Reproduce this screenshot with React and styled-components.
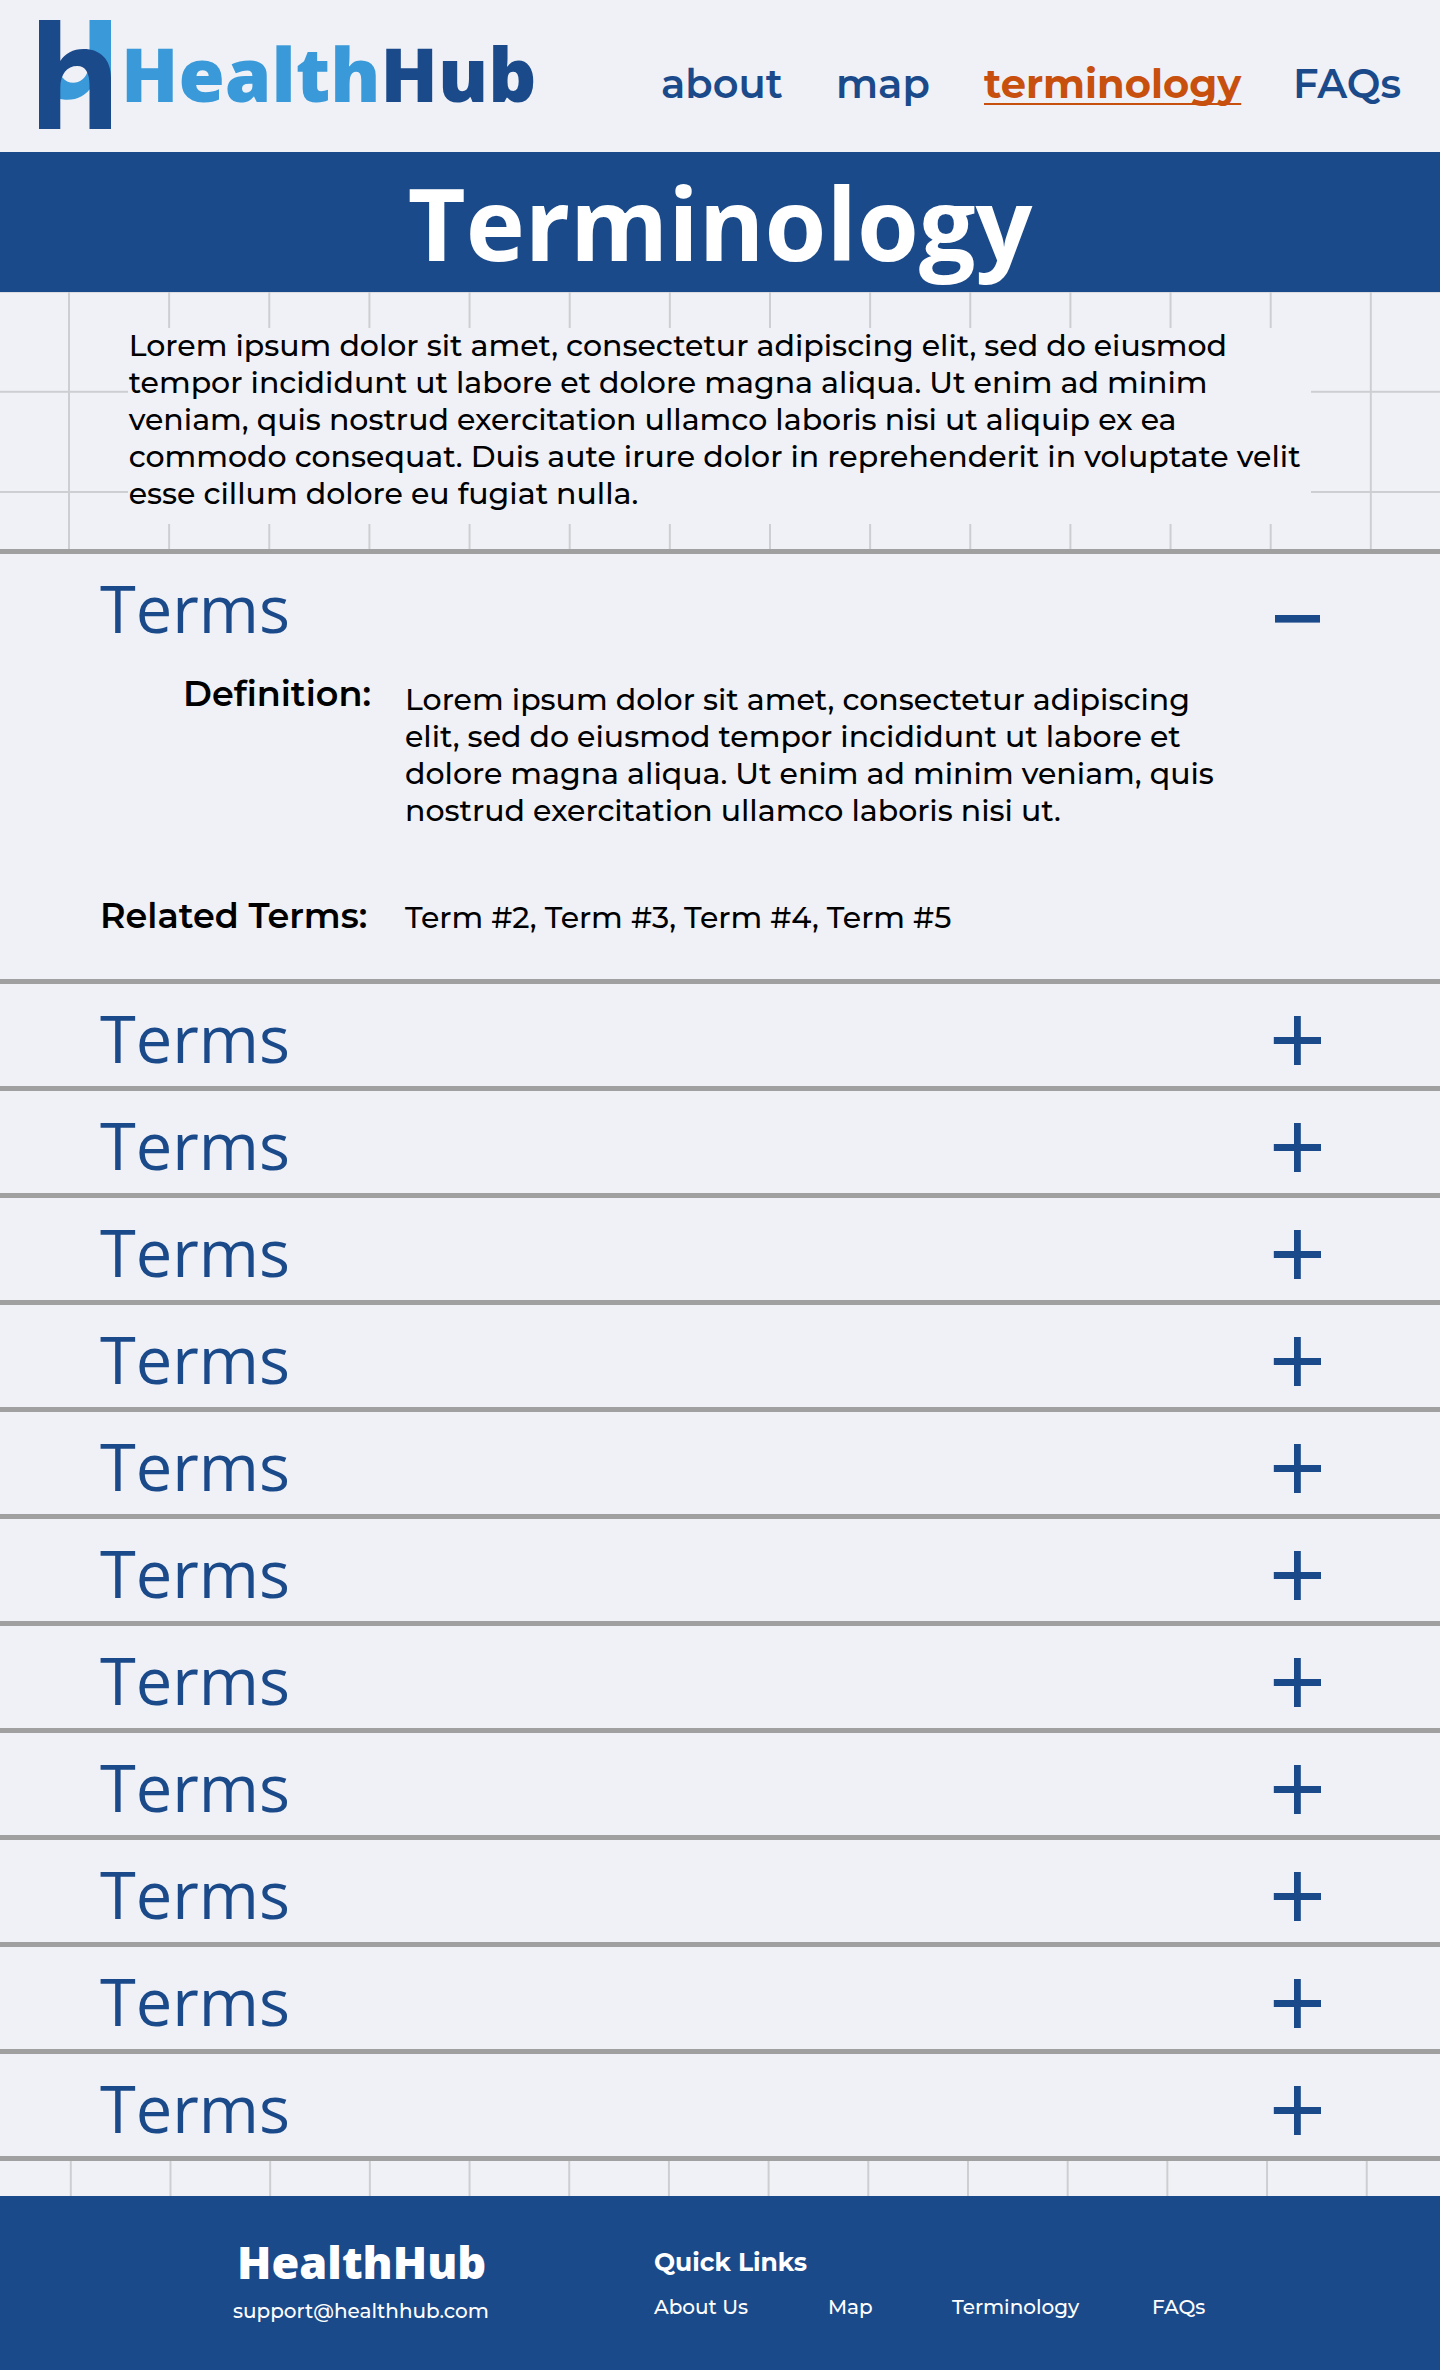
import React, { useState } from "react";
import styled, { createGlobalStyle } from "styled-components";

const blue = "#1b4a8b";
const sky = "#3a99d9";
const orange = "#c8500e";
const paper = "#f0f1f6";
const rule = "#a0a0a0";
const gridLine = "#cdced2";
const display = '"Open Sans", "Noto Sans", sans-serif';
const text = 'Montserrat, Inter, "Noto Sans", sans-serif';

const GlobalStyle = createGlobalStyle`
  * { box-sizing: border-box; }
  body { margin: 0; background: ${paper}; color: #000; font-family: ${text}; }
  h1, h2, h3, p, dl, dt, dd { margin: 0; font-weight: inherit; }
  a { color: inherit; text-decoration: none; }
`;

const Page = styled.div`
  width: 1440px;
  display: flex;
  flex-direction: column;
`;

const Header = styled.header`
  height: 152px;
  display: flex;
  align-items: flex-start;
  justify-content: space-between;
  padding: 20px 38px 0 39px;
`;

const Brand = styled.a`
  display: flex;
  align-items: flex-start;
  gap: 10px;
`;

const Mark = styled.svg`
  display: block;
  width: 72px;
  height: 109px;
`;

const Wordmark = styled.span`
  margin-top: 2px;
  font: 800 75px/102px ${display};
  color: ${blue};
`;

const WordmarkStart = styled.span`
  color: ${sky};
`;

const Nav = styled.nav`
  display: grid;
  grid-template-columns: 175px 148px 309px 109px;
  margin-top: 40px;
`;

const NavLink = styled.a`
  justify-self: start;
  font-size: 40px;
  line-height: 48px;
  font-weight: ${(p) => (p.$active ? 700 : 600)};
  color: ${(p) => (p.$active ? orange : blue)};
  text-decoration: ${(p) => (p.$active ? "underline" : "none")};
  text-decoration-thickness: 2px;
  text-underline-offset: 5px;
  text-decoration-skip-ink: none;
`;

const Banner = styled.div`
  height: 140px;
  background: ${blue};
  color: #fff;
  text-align: center;
`;

const Title = styled.h1`
  font: 700 100px/140px ${display};
`;

const Intro = styled.section`
  height: 257px;
  padding: 36px 129px 25px 128px;
  background-image: linear-gradient(to right, ${gridLine} 2.4px, transparent 2.4px),
    linear-gradient(to bottom, ${gridLine} 2.2px, transparent 2.2px);
  background-size: 100.15px 100%, 100% 100.2px;
  background-position: 68px 0, 0 98.8px;
`;

const IntroText = styled.div`
  display: flex;
  height: 196px;
  padding-left: 0.7px;
  background: ${paper};
`;

const Copy = styled.p`
  margin-top: -1px;
  font-size: 30px;
  line-height: 37px;
  font-weight: 500;
`;

const List = styled.main`
  border-top: 5px solid ${rule};
`;

const Item = styled.section`
  border-bottom: 5px solid ${rule};
`;

const ItemHead = styled.div`
  height: 102px;
  display: flex;
  align-items: center;
  justify-content: space-between;
  padding: 6px 119px 0 100px;
  color: ${blue};
  cursor: pointer;
`;

const ItemName = styled.h2`
  font: 400 65px/90px ${display};
`;

const Toggle = styled.svg`
  display: block;
  width: 48px;
  height: 50px;
  margin-top: ${(p) => (p.$open ? 22 : 5)}px;
`;

const Details = styled.dl`
  display: grid;
  grid-template-columns: 305px 830px;
  row-gap: 66px;
  padding: 16px 0 42px 100px;
`;

const Label = styled.dt`
  padding-top: ${(p) => p.$drop || 0}px;
  padding-left: ${(p) => p.$indent || 0}px;
  font-size: 35px;
  line-height: 42px;
  font-weight: 600;
`;

const Value = styled.dd`
  padding-top: ${(p) => p.$drop}px;
  height: ${(p) => p.$height}px;
  font-size: 30px;
  line-height: 37px;
  font-weight: 500;
`;

const GridStrip = styled.div`
  height: 35px;
  background-image: linear-gradient(to right, ${gridLine} 2.4px, transparent 2.4px);
  background-size: 99.7px 100%;
  background-position: 69.8px 0;
`;

const Footer = styled.footer`
  height: 174px;
  display: grid;
  grid-template-columns: 421px 1fr;
  padding-left: 233px;
  background: ${blue};
  color: #fff;
`;

const FooterBrand = styled.div`
  display: flex;
  flex-direction: column;
  gap: 7px;
  padding-top: 36px;
`;

const FooterName = styled.span`
  margin-left: 4px;
  font: 800 45px/60px ${display};
`;

const FooterText = styled.a`
  font-size: 20px;
  line-height: 24px;
  font-weight: 500;
`;

const QuickLinks = styled.nav`
  display: flex;
  flex-direction: column;
  gap: 18px;
  padding-top: 51px;
`;

const QuickTitle = styled.h3`
  font-size: 25px;
  line-height: 30px;
  font-weight: 700;
`;

const QuickRow = styled.div`
  display: grid;
  grid-template-columns: 174px 124px 200px auto;
`;

const NAV = ["about", "map", "terminology", "FAQs"];
const CURRENT = "terminology";
const LINKS = ["About Us", "Map", "Terminology", "FAQs"];
const TERMS = Array.from({ length: 12 }, (_, id) => ({ id, name: "Terms" }));

function Logo() {
  return (
    <Mark viewBox="0 0 72 109" aria-hidden="true">
      <path fill={sky} d="M50.5 0H72V62H50.5Z" />
      <path
        fill={sky}
        d="M21 57L23.5 57.5C26 61 30 62.7 34.3 62.7C41 62.7 46 58.5 48.5 52L53 52V66C47.5 75 39 79.8 28.3 79.8C25.5 79.8 23 79.5 21 79Z"
      />
      <path
        fill={blue}
        d="M0 0H21.3V41C26 33.5 34 29 44.5 29C61 29 72 39 72 58V109H50.5V65C50.5 53 46.5 46 38.3 46C28 46 21.3 54 21.3 68V109H0Z"
      />
    </Mark>
  );
}

function ToggleIcon({ open }) {
  return (
    <Toggle viewBox="0 0 48 50" $open={open} aria-hidden="true">
      {open ? (
        <rect x="2" y="21" width="45" height="7.6" fill={blue} />
      ) : (
        <>
          <rect x="0.8" y="21" width="47.2" height="7" fill={blue} />
          <rect x="21" y="0" width="6.8" height="49" fill={blue} />
        </>
      )}
    </Toggle>
  );
}

function Term({ name, open, onToggle }) {
  return (
    <Item>
      <ItemHead onClick={onToggle}>
        <ItemName>{name}</ItemName>
        <ToggleIcon open={open} />
      </ItemHead>
      {open && (
        <Details>
          <Label $indent={83} $drop={1}>
            Definition:
          </Label>
          <Value $drop={9} $height={157}>
            Lorem ipsum dolor sit amet, consectetur adipiscing elit, sed do
            eiusmod tempor incididunt ut labore et dolore magna aliqua. Ut enim
            ad minim veniam, quis nostrud exercitation ullamco laboris nisi ut.
          </Value>
          <Label>Related Terms:</Label>
          <Value $drop={4} $height={42}>
            Term #2, Term #3, Term #4, Term #5
          </Value>
        </Details>
      )}
    </Item>
  );
}

export default function App() {
  const [openId, setOpenId] = useState(0);

  return (
    <Page>
      <GlobalStyle />
      <Header>
        <Brand href="#">
          <Logo />
          <Wordmark>
            <WordmarkStart>Health</WordmarkStart>Hub
          </Wordmark>
        </Brand>
        <Nav>
          {NAV.map((label) => (
            <NavLink key={label} href="#" $active={label === CURRENT}>
              {label}
            </NavLink>
          ))}
        </Nav>
      </Header>
      <Banner>
        <Title>Terminology</Title>
      </Banner>
      <Intro>
        <IntroText>
          <Copy>
            Lorem ipsum dolor sit amet, consectetur adipiscing elit, sed do
            eiusmod tempor incididunt ut labore et dolore magna aliqua. Ut enim
            ad minim veniam, quis nostrud exercitation ullamco laboris nisi ut
            aliquip ex ea commodo consequat. Duis aute irure dolor in
            reprehenderit in voluptate velit esse cillum dolore eu fugiat nulla.
          </Copy>
        </IntroText>
      </Intro>
      <List>
        {TERMS.map(({ id, name }) => (
          <Term
            key={id}
            name={name}
            open={id === openId}
            onToggle={() => setOpenId(id === openId ? null : id)}
          />
        ))}
      </List>
      <GridStrip />
      <Footer>
        <FooterBrand>
          <FooterName>HealthHub</FooterName>
          <FooterText href="#">support@healthhub.com</FooterText>
        </FooterBrand>
        <QuickLinks>
          <QuickTitle>Quick Links</QuickTitle>
          <QuickRow>
            {LINKS.map((label) => (
              <FooterText key={label} href="#">
                {label}
              </FooterText>
            ))}
          </QuickRow>
        </QuickLinks>
      </Footer>
    </Page>
  );
}
